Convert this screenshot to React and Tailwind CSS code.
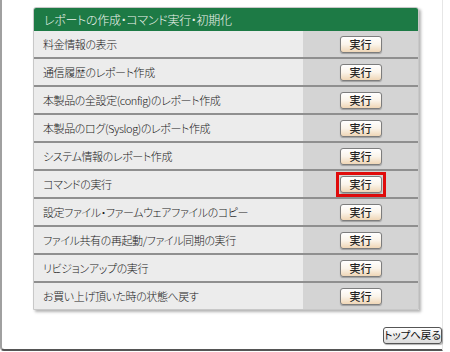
const rows = [
  { label: "料金情報の表示" },
  { label: "通信履歴のレポート作成" },
  { label: "本製品の全設定(config)のレポート作成" },
  { label: "本製品のログ(Syslog)のレポート作成" },
  { label: "システム情報のレポート作成" },
  { label: "コマンドの実行", active: true },
  { label: "設定ファイル・ファームウェアファイルのコピー" },
  { label: "ファイル共有の再起動/ファイル同期の実行" },
  { label: "リビジョンアップの実行" },
  { label: "お買い上げ頂いた時の状態へ戻す" },
];

function RunButton() {
  return (
    <button className="w-[42px] h-[17px] flex items-center justify-center rounded-[3px] border border-[#7d7d7d] bg-gradient-to-b from-white via-[#fbf4ea] to-[#efd6b6] text-[11px] font-medium text-[#222] leading-none shadow-[0_1px_1px_rgba(0,0,0,0.25)]">
      実行
    </button>
  );
}

export default function App() {
  return (
    <div
      className="w-[450px] h-[352px] bg-white overflow-hidden [font-feature-settings:'palt']"
      style={{ fontFamily: '"Noto Sans CJK JP", "Noto Sans", sans-serif' }}
    >
      <div className="w-[443px] h-[351px] border-l-2 border-l-[#a0a0a0] border-b-2 border-b-[#555] border-r border-r-[#e6e6e6] rounded-bl-[4px] pt-[7px] pl-[31px]">
        {/* Panel */}
        <div className="w-[386px] shadow-[2px_2px_3px_rgba(0,0,0,0.3)] rounded-t-[3px] border border-[#c8c8c8]">
          <div className="h-[23px] bg-[#1d7a45] rounded-t-[2px] flex items-center pl-[10px] text-[12px] tracking-[-0.3px] font-light text-[#eef4ee]">
            レポートの作成・コマンド実行・初期化
          </div>

          {rows.map((row, i) => (
            <div
              key={row.label}
              className={
                i < rows.length - 1
                  ? "flex h-[28px] border-b-2 border-[#8f8f8f]"
                  : "flex h-[26px]"
              }
            >
              <div className="w-[269px] bg-[#ececec] flex items-center pl-[9px] text-[11px] tracking-[-0.4px] font-light text-[#1a1a1a]">
                {row.label}
              </div>
              <div className="flex-1 bg-[#d4d4d4] flex items-center justify-center">
                {row.active ? (
                  <div className="border-[3px] border-[#e00b0b] p-[1px] -my-[3px]">
                    <RunButton />
                  </div>
                ) : (
                  <RunButton />
                )}
              </div>
            </div>
          ))}
        </div>

        {/* Back to top */}
        <div className="flex justify-end mt-[17px]">
          <button className="w-[59px] h-[17px] flex items-center justify-center whitespace-nowrap rounded-[3px] border border-[#555] bg-gradient-to-b from-white to-[#dcdcdc] text-[10.5px] text-[#111] leading-none shadow-[1px_1px_1px_rgba(0,0,0,0.3)]">
            トップへ戻る
          </button>
        </div>
      </div>
    </div>
  );
}
